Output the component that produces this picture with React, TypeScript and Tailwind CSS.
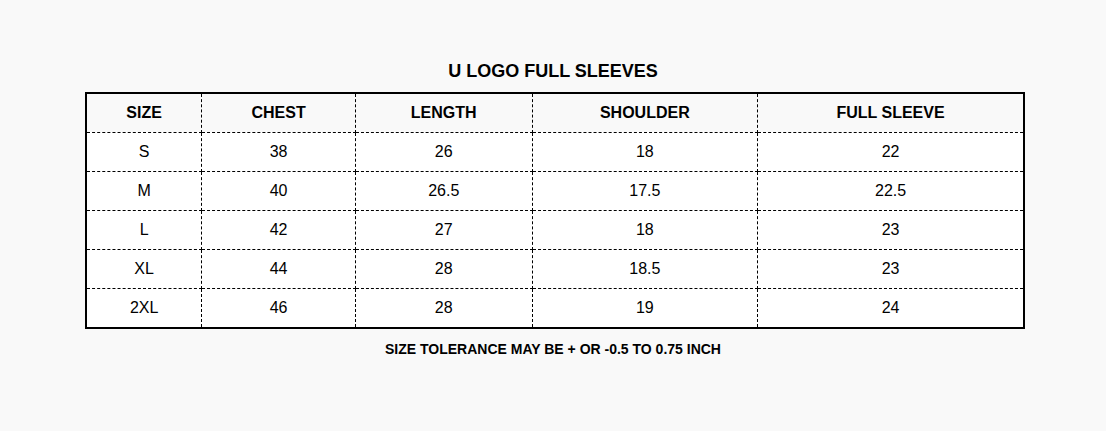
const columns = ["SIZE", "CHEST", "LENGTH", "SHOULDER", "FULL SLEEVE"];
const widths = ["w-[116px]", "w-[154px]", "w-[177px]", "w-[226px]", "w-[267px]"];

const rows = [
  ["S", "38", "26", "18", "22"],
  ["M", "40", "26.5", "17.5", "22.5"],
  ["L", "42", "27", "18", "23"],
  ["XL", "44", "28", "18.5", "23"],
  ["2XL", "46", "28", "19", "24"],
];

export default function App() {
  return (
    <div
      className="min-h-screen bg-[#f9f9f9] pt-[59px] text-black"
      style={{ fontFamily: '"Liberation Sans", Arial, sans-serif' }}
    >
      <h2 className="mb-[9px] text-center text-[18px] font-bold leading-6">U LOGO FULL SLEEVES</h2>
      <table className="ml-[85px] w-[940px] border-collapse border-2 border-black">
        <thead>
          <tr className="bg-[#f9f9f9]">
            {columns.map((c, i) => (
              <th
                key={c}
                className={`${widths[i]} h-[39px] border border-dashed border-black p-0 text-center text-base font-bold`}
              >
                {c}
              </th>
            ))}
          </tr>
        </thead>
        <tbody>
          {rows.map((r, ri) => (
            <tr key={r[0]} className="bg-white">
              {r.map((v, i) => (
                <td
                  key={i}
                  className={`${ri === rows.length - 1 ? "h-[40px]" : "h-[39px]"} border border-dashed border-black p-0 text-center text-base`}
                >
                  {v}
                </td>
              ))}
            </tr>
          ))}
        </tbody>
      </table>
      <p className="mt-[10px] text-center text-sm font-bold leading-5">SIZE TOLERANCE MAY BE + OR -0.5 TO 0.75 INCH</p>
    </div>
  );
}
